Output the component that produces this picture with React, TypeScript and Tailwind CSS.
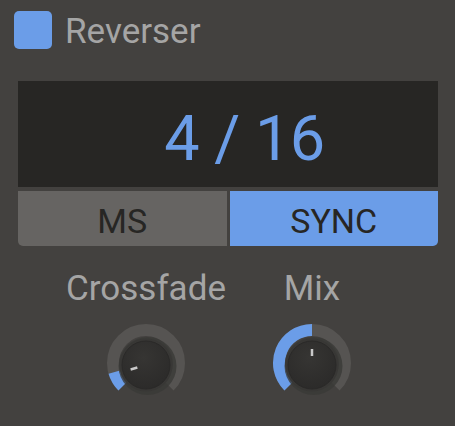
import React from "react";

const BLUE = "#6b9de8";

const polar = (cx: number, cy: number, r: number, deg: number) => {
  const a = (deg * Math.PI) / 180;
  return [cx + r * Math.sin(a), cy - r * Math.cos(a)];
};

const arc = (cx: number, cy: number, r: number, from: number, to: number) => {
  const [x1, y1] = polar(cx, cy, r, from);
  const [x2, y2] = polar(cx, cy, r, to);
  const large = to - from > 180 ? 1 : 0;
  return `M ${x1} ${y1} A ${r} ${r} 0 ${large} 1 ${x2} ${y2}`;
};

const Knob: React.FC<{ value: number; id: string }> = ({ value, id }) => {
  const cx = 40;
  const cy = 40;
  const start = 225;
  const end = start + 270 * value;
  const [ix1, iy1] = polar(cx, cy + 2, 9, end);
  const [ix2, iy2] = polar(cx, cy + 2, 16, end);

  return (
    <svg width="80" height="80" viewBox="0 0 80 80">
      <defs>
        <radialGradient id={`body-${id}`} cx="45%" cy="35%" r="70%">
          <stop offset="0%" stopColor="#363533" />
          <stop offset="100%" stopColor="#2b2a29" />
        </radialGradient>
      </defs>
      <path d={arc(cx, cy, 33, start, start + 270)} stroke="#565452" strokeWidth="12" fill="none" />
      {value > 0 && (
        <path d={arc(cx, cy, 33, start, end)} stroke={BLUE} strokeWidth="12" fill="none" />
      )}
      <circle cx={cx + 1.5} cy={cy + 3} r="29" fill="#3a3937" opacity="0.8" />
      <circle cx={cx} cy={cy + 2} r="26.5" fill="#383735" />
      <circle cx={cx} cy={cy + 2} r="24" fill={`url(#body-${id})`} stroke="#2a2928" strokeWidth="1" />
      <line x1={ix1} y1={iy1} x2={ix2} y2={iy2} stroke="#c9c9c9" strokeWidth="2.5" />
    </svg>
  );
};

const App: React.FC = () => {
  return (
    <div
      className="w-[455px] h-[426px] bg-[#43413f] pt-[11px] overflow-hidden"
      style={{ fontFamily: "Roboto, 'Liberation Sans', sans-serif" }}
    >
      <div className="flex items-center h-[38px] pl-[14px] gap-[13px]">
        <div className="w-[38px] h-[38px] rounded-[5px] bg-[#6b9de8]" />
        <span className="text-[35px] leading-[38px] pt-[3px] text-[#a5a5a5]">Reverser</span>
      </div>

      <div className="mt-[32px] ml-[18px] w-[420px]">
        <div className="h-[106px] bg-[#272624] flex items-center justify-center pl-[33px] pt-[8px]">
          <span className="text-[63px] leading-none tracking-[-0.5px] text-[#6b9de8]">4 / 16</span>
        </div>
        <div className="mt-[4px] grid grid-cols-2 gap-[3px] h-[55px]">
          <button className="bg-[#666462] rounded-bl-[5px] text-[34px] leading-none pt-[4px] text-[#272624]">
            MS
          </button>
          <button className="bg-[#6b9de8] rounded-br-[5px] text-[34px] leading-none pt-[4px] text-[#272624]">
            SYNC
          </button>
        </div>
      </div>

      <div className="mt-[23px] flex pl-[66px] gap-[46px]">
        <div className="w-[160px] flex flex-col items-center">
          <span className="text-[35px] leading-[40px] text-[#a5a5a5]">Crossfade</span>
          <div className="mt-[14px]">
            <Knob value={0.107} id="xf" />
          </div>
        </div>
        <div className="w-[80px] flex flex-col items-center">
          <span className="text-[35px] leading-[40px] text-[#a5a5a5]">Mix</span>
          <div className="mt-[14px]">
            <Knob value={0.5} id="mix" />
          </div>
        </div>
      </div>
    </div>
  );
};

export default App;
